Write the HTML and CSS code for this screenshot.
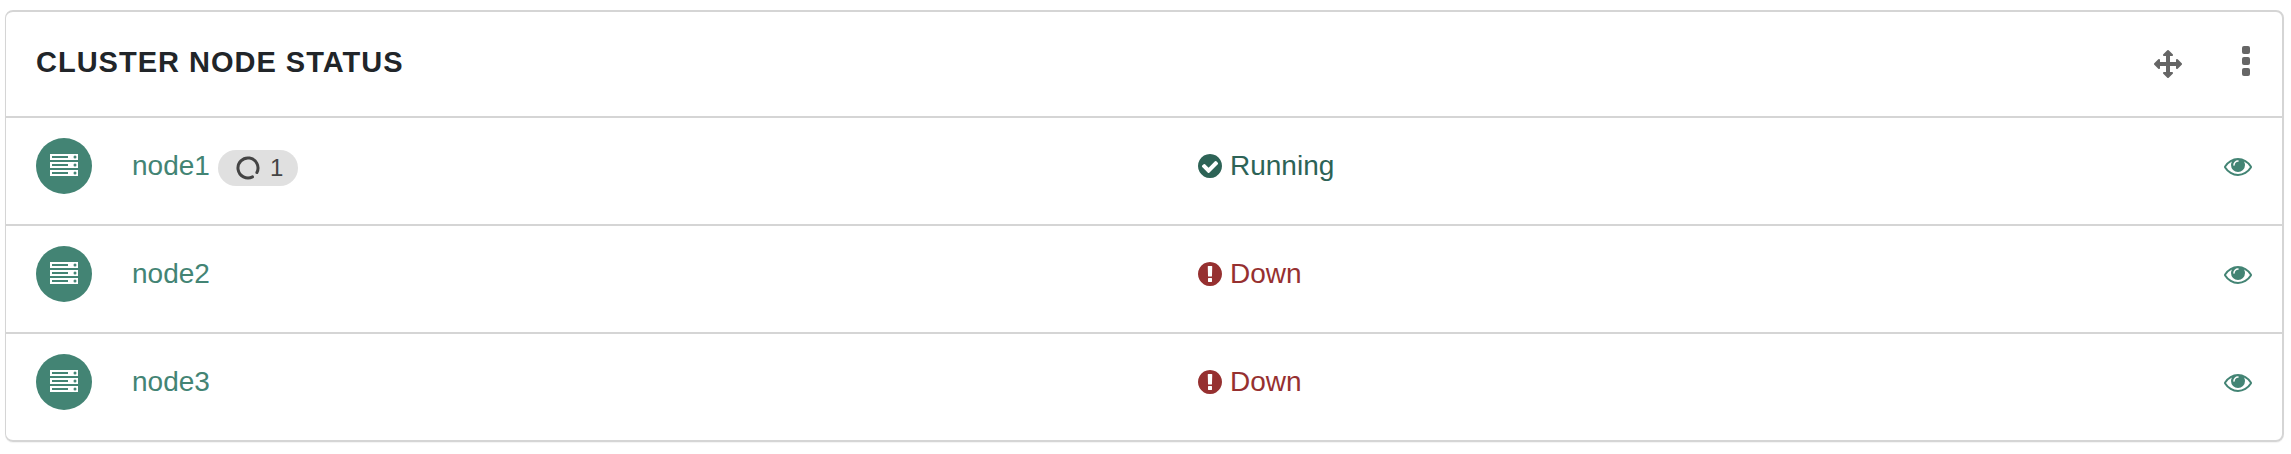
FILE: index.html
```
<!DOCTYPE html>
<html lang="en">
<head>
    <meta charset="UTF-8">
    <meta name="viewport" content="width=device-width, initial-scale=1.0">
    <title>Cluster Node Status</title>
    <link rel="stylesheet" href="styles.css">
</head>
<body>
    <!-- Shared icons -->
    <svg class="sprite" aria-hidden="true">
        <symbol id="server" viewBox="0 0 28 22">
            <path fill-rule="evenodd" d="M0 0h28v6H0zM2 2v2h16V2zM0 8h28v6H0zM2 10v2h16v-2zM0 16h28v6H0zM2 18v2h16v-2z"/>
            <g class="server-led">
                <circle cx="25" cy="3" r="1.5"/>
                <circle cx="25" cy="11" r="1.5"/>
                <circle cx="25" cy="19" r="1.5"/>
            </g>
        </symbol>
        <symbol id="eye" viewBox="0 384 1792 1152">
            <path d="M1664 960q-152-236-381-353 61 104 61 225 0 185-131.5 316.5t-316.5 131.5-316.5-131.5-131.5-316.5q0-121 61-225-229 117-381 353 133 205 333.5 326.5t434.5 121.5 434.5-121.5 333.5-326.5zm-720-384q0-20-14-34t-34-14q-125 0-214.5 89.5t-89.5 214.5q0 20 14 34t34 14 34-14 14-34q0-86 61-147t147-61q20 0 34-14t14-34zm848 384q0 34-20 69-140 230-376.5 368.5t-499.5 138.5-499.5-139-376.5-368q-20-35-20-69t20-69q140-229 376.5-368t499.5-139 499.5 139 376.5 368q20 35 20 69z"/>
        </symbol>
        <symbol id="ok" viewBox="128 128 1536 1536">
            <path d="M1412 734q0-28-18-46l-91-90q-19-19-45-19t-45 19l-408 407-226-226q-19-19-45-19t-45 19l-91 90q-18 18-18 46 0 27 18 45l362 362q19 19 45 19 27 0 46-19l543-543q18-18 18-45zm252 162q0 209-103 385.5t-279.5 279.5-385.5 103-385.5-103-279.5-279.5-103-385.5 103-385.5 279.5-279.5 385.5-103 385.5 103 279.5 279.5 103 385.5z"/>
        </symbol>
        <symbol id="error" viewBox="128 128 1536 1536">
            <path d="M896 128q209 0 385.5 103t279.5 279.5 103 385.5-103 385.5-279.5 279.5-385.5 103-385.5-103-279.5-279.5-103-385.5 103-385.5 279.5-279.5 385.5-103zm128 1247v-190q0-14-9-23.5t-22-9.5h-192q-13 0-23 10t-10 23v190q0 13 10 23t23 10h192q13 0 22-9.5t9-23.5zm-2-344l18-621q0-12-10-18-10-8-24-8h-220q-14 0-24 8-10 6-10 18l17 621q0 10 10 17.5t24 7.5h185q14 0 23.5-7.5t10.5-17.5z"/>
        </symbol>
    </svg>

    <section class="panel">
        <header class="panel-header">
            <h2 class="panel-title">CLUSTER NODE STATUS</h2>
            <div class="panel-tools">
                <button class="tool" type="button" aria-label="Move">
                    <svg class="icon-move" viewBox="0 0 1792 1792"><path d="M1792 896q0 26-19 45l-256 256q-19 19-45 19t-45-19-19-45v-128h-384v384h128q26 0 45 19t19 45-19 45l-256 256q-19 19-45 19t-45-19l-256-256q-19-19-19-45t19-45 45-19h128v-384h-384v128q0 26-19 45t-45 19-45-19l-256-256q-19-19-19-45t19-45l256-256q19-19 45-19t45 19 19 45v128h384v-384h-128q-26 0-45-19t-19-45 19-45l256-256q19-19 45-19t45 19l256 256q19 19 19 45t-19 45-45 19h-128v384h384v-128q0-26 19-45t45-19 45 19l256 256q19 19 19 45z"/></svg>
                </button>
                <button class="tool" type="button" aria-label="Menu">
                    <svg class="icon-menu" viewBox="0 0 8 30">
                        <rect width="8" height="8" rx="2"/>
                        <rect y="11" width="8" height="8" rx="2"/>
                        <rect y="22" width="8" height="8" rx="2"/>
                    </svg>
                </button>
            </div>
        </header>

        <table class="nodes">
            <tbody>
                <tr class="node">
                    <td class="node-icon"><span class="avatar"><svg><use href="#server"/></svg></span></td>
                    <td class="node-name">
                        <a href="#node1">node1</a>
                        <span class="badge">
                            <svg class="spinner" viewBox="0 0 24 24"><path d="M16.500 20.900A10 10 0 1 1 20.900 16.500"/></svg>
                            1
                        </span>
                    </td>
                    <td class="status running"><svg><use href="#ok"/></svg>Running</td>
                    <td class="node-view"><a href="#node1" aria-label="View node1"><svg><use href="#eye"/></svg></a></td>
                </tr>
                <tr class="node">
                    <td class="node-icon"><span class="avatar"><svg><use href="#server"/></svg></span></td>
                    <td class="node-name"><a href="#node2">node2</a></td>
                    <td class="status down"><svg><use href="#error"/></svg>Down</td>
                    <td class="node-view"><a href="#node2" aria-label="View node2"><svg><use href="#eye"/></svg></a></td>
                </tr>
                <tr class="node">
                    <td class="node-icon"><span class="avatar"><svg><use href="#server"/></svg></span></td>
                    <td class="node-name"><a href="#node3">node3</a></td>
                    <td class="status down"><svg><use href="#error"/></svg>Down</td>
                    <td class="node-view"><a href="#node3" aria-label="View node3"><svg><use href="#eye"/></svg></a></td>
                </tr>
            </tbody>
        </table>
    </section>
</body>
</html>
```
FILE: styles.css
```
* {
    box-sizing: border-box;
}

body {
    margin: 0;
    padding: 10px 7px 10px 5px;
    background-color: #fff;
    color: #212529;
    font-family: "Liberation Sans", Arial, sans-serif;
    font-size: 28px;
    line-height: 42px;
}

svg {
    display: block;
    fill: currentColor;
}

.sprite {
    position: absolute;
    width: 0;
    height: 0;
}

/* Panel */
.panel {
    border: 2px solid #d5d5d5;
    border-left-width: 1px;
    border-radius: 8px;
    box-shadow: 0 1px 1px rgba(0, 0, 0, 0.05);
}

.panel-header {
    display: flex;
    justify-content: space-between;
    align-items: flex-start;
    padding: 29px 32px 33px 30px;
}

.panel-title {
    margin: 0;
    font-size: 29px;
    font-weight: bold;
    letter-spacing: 1px;
}

.panel-tools {
    display: flex;
    gap: 60px;
    padding-top: 5px;
}

.tool {
    display: flex;
    padding: 0;
    border: 0;
    background: none;
    color: #666;
    cursor: pointer;
}

.icon-move {
    width: 28px;
    height: 28px;
    margin-top: 4px;
}

.icon-menu {
    width: 8px;
    height: 30px;
}

/* Node rows */
.nodes {
    display: block;
}

.nodes tbody {
    display: block;
}

.node {
    display: grid;
    grid-template-columns: 96px calc(50% - 42px) 1fr auto;
    padding: 20px 30px 30px;
    border-top: 2px solid #d5d5d5;
}

.node td {
    padding: 0;
}

.avatar {
    display: flex;
    justify-content: center;
    width: 56px;
    height: 56px;
    padding-top: 16px;
    border-radius: 50%;
    background-color: #438474;
    color: #fff;
}

.avatar svg {
    width: 28px;
    height: 22px;
}

.server-led {
    fill: #438474;
}

.node a {
    color: #438474;
    text-decoration: none;
}

.node-name,
.status {
    display: flex;
    align-items: center;
    height: 56px;
    gap: 8px;
}

.badge {
    display: flex;
    align-items: center;
    gap: 10px;
    height: 36px;
    margin-top: 4px;
    padding: 0 15px 0 18px;
    border-radius: 18px;
    background-color: #e0e0e0;
    color: #444;
    font-size: 24px;
    line-height: 36px;
}

.spinner {
    width: 24px;
    height: 24px;
    fill: none;
    stroke: currentColor;
    stroke-width: 3;
    stroke-linecap: round;
}

.status svg {
    width: 24px;
    height: 24px;
}

.running {
    color: #2d6356;
}

.down {
    color: #963030;
}

.node-view svg {
    width: 28px;
    height: 18px;
    margin-top: 20px;
}
```
